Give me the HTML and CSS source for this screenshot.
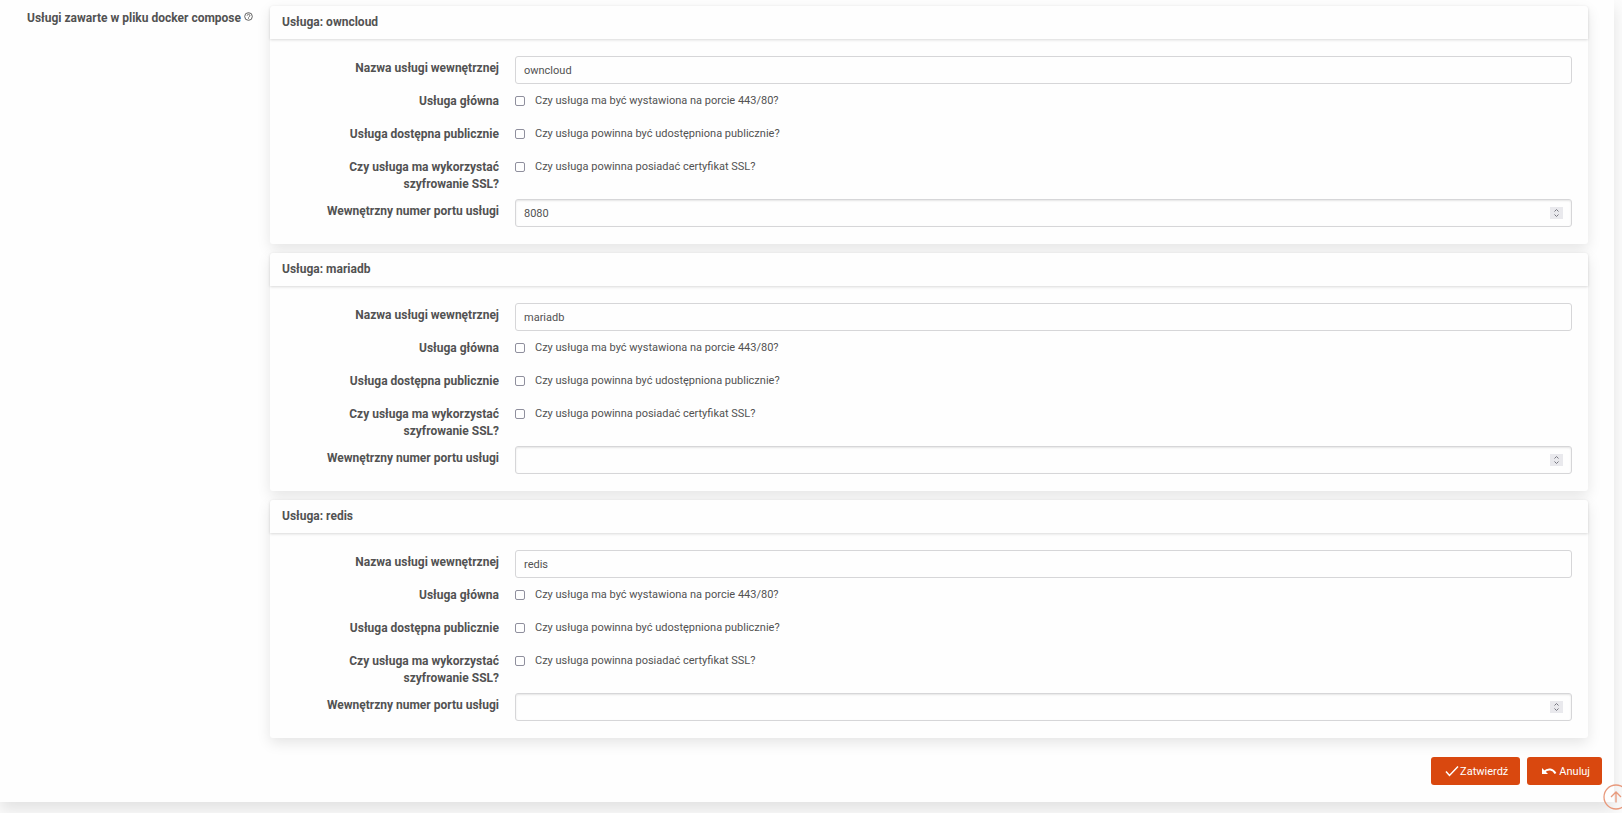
FILE: index.html
```
<!DOCTYPE html>
<html lang="pl">
<head>
    <meta charset="UTF-8">
    <meta name="viewport" content="width=device-width, initial-scale=1.0">
    <title>Usługi docker compose</title>
    <link rel="stylesheet" href="styles.css">
</head>
<body>
    <form class="panel">
        <div class="services">
            <div class="services-label">
                Usługi zawarte w pliku docker compose
                <svg class="help-icon" viewBox="0 0 20 20" aria-hidden="true">
                    <circle cx="10" cy="10" r="8.5" />
                    <path d="M7 8a3 3 0 1 1 4.5 2.6c-1 .6-1.5 1-1.5 2M10 14v1.6" />
                </svg>
            </div>

            <div class="cards">
                <section class="card">
                    <h2 class="card-header">Usługa: owncloud</h2>
                    <div class="card-body">
                        <div class="form-row">
                            <label for="name1">Nazwa usługi wewnętrznej</label>
                            <input class="text-input" type="text" id="name1" name="name1" value="owncloud">
                        </div>
                        <div class="form-row">
                            <label for="main1">Usługa główna</label>
                            <div class="check">
                                <input type="checkbox" id="main1" name="main1">
                                <label for="main1">Czy usługa ma być wystawiona na porcie 443/80?</label>
                            </div>
                        </div>
                        <div class="form-row">
                            <label for="public1">Usługa dostępna publicznie</label>
                            <div class="check">
                                <input type="checkbox" id="public1" name="public1">
                                <label for="public1">Czy usługa powinna być udostępniona publicznie?</label>
                            </div>
                        </div>
                        <div class="form-row">
                            <label for="ssl1">Czy usługa ma wykorzystać szyfrowanie SSL?</label>
                            <div class="check">
                                <input type="checkbox" id="ssl1" name="ssl1">
                                <label for="ssl1">Czy usługa powinna posiadać certyfikat SSL?</label>
                            </div>
                        </div>
                        <div class="form-row">
                            <label for="port1">Wewnętrzny numer portu usługi</label>
                            <input class="text-input" type="number" id="port1" name="port1" value="8080">
                        </div>
                    </div>
                </section>

                <section class="card">
                    <h2 class="card-header">Usługa: mariadb</h2>
                    <div class="card-body">
                        <div class="form-row">
                            <label for="name2">Nazwa usługi wewnętrznej</label>
                            <input class="text-input" type="text" id="name2" name="name2" value="mariadb">
                        </div>
                        <div class="form-row">
                            <label for="main2">Usługa główna</label>
                            <div class="check">
                                <input type="checkbox" id="main2" name="main2">
                                <label for="main2">Czy usługa ma być wystawiona na porcie 443/80?</label>
                            </div>
                        </div>
                        <div class="form-row">
                            <label for="public2">Usługa dostępna publicznie</label>
                            <div class="check">
                                <input type="checkbox" id="public2" name="public2">
                                <label for="public2">Czy usługa powinna być udostępniona publicznie?</label>
                            </div>
                        </div>
                        <div class="form-row">
                            <label for="ssl2">Czy usługa ma wykorzystać szyfrowanie SSL?</label>
                            <div class="check">
                                <input type="checkbox" id="ssl2" name="ssl2">
                                <label for="ssl2">Czy usługa powinna posiadać certyfikat SSL?</label>
                            </div>
                        </div>
                        <div class="form-row">
                            <label for="port2">Wewnętrzny numer portu usługi</label>
                            <input class="text-input" type="number" id="port2" name="port2">
                        </div>
                    </div>
                </section>

                <section class="card">
                    <h2 class="card-header">Usługa: redis</h2>
                    <div class="card-body">
                        <div class="form-row">
                            <label for="name3">Nazwa usługi wewnętrznej</label>
                            <input class="text-input" type="text" id="name3" name="name3" value="redis">
                        </div>
                        <div class="form-row">
                            <label for="main3">Usługa główna</label>
                            <div class="check">
                                <input type="checkbox" id="main3" name="main3">
                                <label for="main3">Czy usługa ma być wystawiona na porcie 443/80?</label>
                            </div>
                        </div>
                        <div class="form-row">
                            <label for="public3">Usługa dostępna publicznie</label>
                            <div class="check">
                                <input type="checkbox" id="public3" name="public3">
                                <label for="public3">Czy usługa powinna być udostępniona publicznie?</label>
                            </div>
                        </div>
                        <div class="form-row">
                            <label for="ssl3">Czy usługa ma wykorzystać szyfrowanie SSL?</label>
                            <div class="check">
                                <input type="checkbox" id="ssl3" name="ssl3">
                                <label for="ssl3">Czy usługa powinna posiadać certyfikat SSL?</label>
                            </div>
                        </div>
                        <div class="form-row">
                            <label for="port3">Wewnętrzny numer portu usługi</label>
                            <input class="text-input" type="number" id="port3" name="port3">
                        </div>
                    </div>
                </section>
            </div>
        </div>

        <div class="actions">
            <button class="button" type="submit">
                <svg class="check-icon" viewBox="0 0 14 12" aria-hidden="true"><path d="M1 6.5l3.5 4L13 1.5" /></svg>Zatwierdź
            </button>
            <button class="button" type="button">
                <svg class="undo-icon" viewBox="0 0 16 8" aria-hidden="true"><path class="head" d="M1 1v6h6z" /><path d="M3 5c4-4 9-3 11.5 1.5" /></svg>Anuluj
            </button>
        </div>
    </form>

    <a class="to-top" href="#" aria-label="Do góry">
        <svg viewBox="0 0 26 26" aria-hidden="true"><circle cx="13" cy="13" r="12" /><path d="M13 18.5V8.5M8 13l5-5 5 5" /></svg>
    </a>
</body>
</html>
```
FILE: styles.css
```
* {
    box-sizing: border-box;
}

body {
    margin: 0;
    min-height: 100vh;
    background-color: #fcfcfc;
    color: #525252;
    font-family: Roboto, Arial, sans-serif;
    font-size: 11px;
    line-height: 17px;
}

.panel {
    margin-right: 8px;
    padding: 6px 12px 17px 0;
    background-color: #fefefe;
    box-shadow: 0 8px 14px rgba(0, 0, 0, 0.1);
}

.services {
    display: flex;
    padding-right: 14px;
}

.services-label {
    flex: 0 0 270px;
    padding: 4px 17px 0 0;
    text-align: right;
    font-size: 12px;
    font-weight: bold;
}

.help-icon {
    width: 9px;
    height: 9px;
    vertical-align: 1px;
    fill: none;
    stroke: #525252;
    stroke-width: 2;
}

.cards {
    flex: 1;
    display: flex;
    flex-direction: column;
    gap: 9px;
}

.card {
    border-radius: 3px;
    background-color: #fefefe;
    box-shadow: 0 5px 14px rgba(0, 0, 0, 0.1);
}

.card-header {
    margin: 0;
    padding: 8px 12px;
    border-radius: 3px 3px 0 0;
    box-shadow: 0 1px 3px rgba(0, 0, 0, 0.15);
    font-size: 12px;
    line-height: 17px;
}

.card-body {
    display: flex;
    flex-direction: column;
    gap: 5px;
    padding: 17px 16px 17px 0;
}

.form-row {
    display: grid;
    grid-template-columns: 229px 1fr;
    column-gap: 16px;
    align-items: start;
    min-height: 28px;
}

.form-row > label {
    padding: 4px 0 1px 50px;
    text-align: right;
    font-size: 12px;
    font-weight: bold;
}

.text-input {
    width: 100%;
    height: 28px;
    padding: 0 8px;
    border: 1px solid #d6d6d8;
    border-radius: 3px;
    background-color: #fefefe;
    color: #525252;
    font-family: inherit;
    font-size: 11px;
}

.text-input[type="number"] {
    box-shadow: inset 0 1px 2px rgba(0, 0, 0, 0.1);
}

.text-input::-webkit-inner-spin-button {
    appearance: none;
    width: 13px;
    height: 12px;
    opacity: 1;
    background: #e9e9ed url("data:image/svg+xml,%3Csvg xmlns='http://www.w3.org/2000/svg' viewBox='0 0 13 12' fill='none' stroke='%23777780'%3E%3Cpath d='M4.5 4.5l2-2 2 2M4.5 7.5l2 2 2-2'/%3E%3C/svg%3E");
}

.check {
    display: flex;
    align-items: center;
    gap: 10px;
    padding-top: 3px;
}

.check input {
    appearance: none;
    width: 10px;
    height: 10px;
    margin: 0;
    border: 1px solid #8f8f9d;
    border-radius: 2px;
    background-color: #fefefe;
}

.check input:checked {
    background-color: #d9480f;
}

.actions {
    display: flex;
    justify-content: flex-end;
    gap: 7px;
    padding-top: 19px;
}

.button {
    display: flex;
    align-items: center;
    height: 28px;
    padding: 0 12px 0 14px;
    border: none;
    border-radius: 3px;
    background-color: #d9480f;
    color: #fff;
    font-family: inherit;
    font-size: 11px;
    cursor: pointer;
}

.button svg {
    fill: none;
    stroke: #fff;
    stroke-width: 2;
}

.button .check-icon {
    width: 14px;
    height: 12px;
    margin-right: 1px;
    stroke-width: 1.5;
}

.undo-icon {
    width: 16px;
    height: 8px;
    margin-right: 2px;
}

.undo-icon .head {
    fill: #fff;
    stroke: none;
}

.to-top {
    position: fixed;
    right: -7px;
    bottom: 3px;
    width: 26px;
    height: 26px;
}

.to-top svg {
    display: block;
    fill: none;
    stroke: #e8997c;
    stroke-width: 1.3;
}
```
